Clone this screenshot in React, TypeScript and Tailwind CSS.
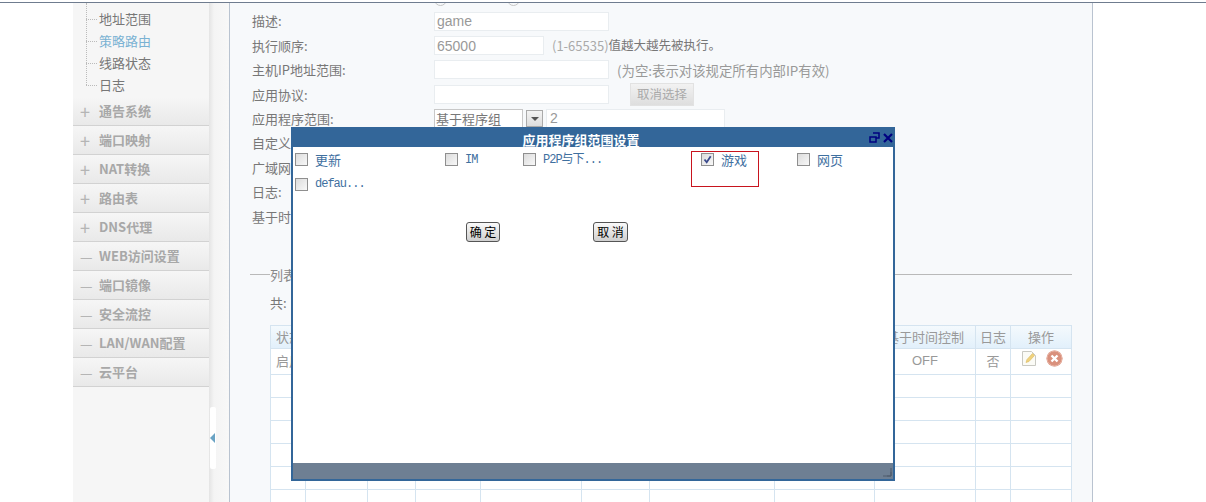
import React from "react";

const subItems = [
  { label: "地址范围", active: false },
  { label: "策略路由", active: true },
  { label: "线路状态", active: false },
  { label: "日志", active: false },
];

const sections = [
  { label: "通告系统", sign: "+" },
  { label: "端口映射", sign: "+" },
  { label: "NAT转换", sign: "+" },
  { label: "路由表", sign: "+" },
  { label: "DNS代理", sign: "+" },
  { label: "WEB访问设置", sign: "—" },
  { label: "端口镜像", sign: "—" },
  { label: "安全流控", sign: "—" },
  { label: "LAN/WAN配置", sign: "—" },
  { label: "云平台", sign: "—" },
];

const columns = [35, 62, 48, 65, 101, 68, 125, 100, 101, 35, 61];

const Sidebar = () => (
  <div className="w-[136px] h-full flex-shrink-0 bg-[#f6f6f6] flex flex-col">
    <div className="relative pt-[5px] pb-[1px] pl-[26px] h-[94px] flex-shrink-0">
      <div className="absolute left-[13px] top-[0px] h-[82px] border-l border-dotted border-[#bbb]" />
      {subItems.map((item) => (
        <div key={item.label} className={`relative h-[22px] leading-[22px] text-[13px] ${item.active ? "text-[#7ab2d3]" : "text-[#777]"}`}>
          <span className="absolute left-[-13px] top-[11px] w-[11px] border-t border-dotted border-[#bbb]" />
          {item.label}
        </div>
      ))}
    </div>
    {sections.map((s) => (
      <div key={s.label} className="h-[29px] flex-shrink-0 flex items-center border-b border-[#d2d2d2] bg-gradient-to-b from-[#f6f6f6] to-[#e9e9e9]">
        <span className={`w-[26px] pl-[7px] leading-none text-[#b5b5b5] ${s.sign === "+" ? "text-[18px]" : "text-[14px]"}`}>{s.sign}</span>
        <span className="text-[13px] font-bold text-[#a8a8a8]">{s.label}</span>
      </div>
    ))}
  </div>
);

const Gutter = () => (
  <div className="relative w-[20px] h-full flex-shrink-0 bg-gradient-to-r from-[#e4e4e4] via-[#f4f4f4] via-[25%] to-[#f8f8f8]">
    <div className="absolute left-[1px] top-[404px] w-[6px] h-[62px] bg-white rounded-[2px] flex items-center">
      <span className="w-0 h-0 border-y-[5px] border-y-transparent border-r-[5px] border-r-[#6aa3c4]" />
    </div>
  </div>
);

const FormRow = ({ label, children }: { label: string; children?: React.ReactNode }) => (
  <div className="h-[24.4px] flex-shrink-0 flex items-center">
    <span className="w-[182px] flex-shrink-0 text-[13px] text-[#777]">{label}</span>
    {children}
  </div>
);

const TextBox = ({ value, w }: { value?: string; w: string }) => (
  <div className={`${w} h-[19px] flex items-center px-[2px] border border-[#e9edf0] bg-white text-[14px] leading-none text-[#999] font-['Liberation_Sans',sans-serif]`}>
    {value}
  </div>
);

const EditIcon = () => (
  <svg width="16" height="17" viewBox="0 0 16 17">
    <path d="M1.5 1.5h9l4 4v10h-13z" fill="#fbfbf6" stroke="#c9c9c2" />
    <path d="M5 12.5l1-3 5.5-6 2 2-5.5 6z" fill="#efd27e" stroke="#dcb85c" strokeWidth="0.6" />
  </svg>
);

const DeleteIcon = () => (
  <svg width="17" height="17" viewBox="0 0 17 17">
    <circle cx="8.5" cy="8.5" r="8" fill="#d9907c" />
    <circle cx="8.5" cy="8.5" r="7.5" fill="none" stroke="#e8b5a6" />
    <path d="M5.5 5.5l6 6M11.5 5.5l-6 6" stroke="#fff" strokeWidth="2.4" />
  </svg>
);

const ListTable = () => (
  <table className="table-fixed border-collapse w-[802px] bg-white text-[13px] text-[#999]">
    <colgroup>
      {columns.map((w, i) => (
        <col key={i} style={{ width: w }} />
      ))}
    </colgroup>
    <thead>
      <tr className="h-[23px] bg-gradient-to-b from-[#f5fafd] to-[#e2f0fb]">
        <th className="border border-[#d5e4f0] font-normal text-left pl-[5px]">状态</th>
        {columns.slice(1, 8).map((_, i) => (
          <th key={i} className="border border-[#d5e4f0]" />
        ))}
        <th className="border border-[#d5e4f0] font-normal whitespace-nowrap">基于时间控制</th>
        <th className="border border-[#d5e4f0] font-normal">日志</th>
        <th className="border border-[#d5e4f0] font-normal">操作</th>
      </tr>
    </thead>
    <tbody>
      <tr className="h-[26px]">
        <td className="border border-[#d5e4f0] pl-[5px]">启用</td>
        {columns.slice(1, 8).map((_, i) => (
          <td key={i} className="border border-[#d5e4f0]" />
        ))}
        <td className="border border-[#d5e4f0] text-center font-['Liberation_Sans',sans-serif]">OFF</td>
        <td className="border border-[#d5e4f0] text-center">否</td>
        <td className="border border-[#d5e4f0]">
          <div className="flex items-start gap-[9px] pl-[10px] pb-[5px]">
            <EditIcon />
            <DeleteIcon />
          </div>
        </td>
      </tr>
      {[0, 1, 2, 3, 4, 5].map((r) => (
        <tr key={r} className="h-[23px]">
          {columns.map((_, i) => (
            <td key={i} className="border border-[#d5e4f0]" />
          ))}
        </tr>
      ))}
    </tbody>
  </table>
);

const Main = () => (
  <div className="w-[864px] h-full flex-shrink-0 border-x border-[#b9c3d0] bg-[#f7f9fb] pl-[22px] flex flex-col">
    <div className="h-[6px] flex-shrink-0 pl-[182px] flex gap-[60px] overflow-hidden">
      <span className="w-[13px] h-[13px] -mt-[10px] rounded-full border border-[#c5c5c5]" />
      <span className="w-[13px] h-[13px] -mt-[10px] rounded-full border border-[#c5c5c5]" />
    </div>
    <FormRow label="描述:">
      <TextBox value="game" w="w-[175px]" />
    </FormRow>
    <FormRow label="执行顺序:">
      <TextBox value="65000" w="w-[110px]" />
      <span className="ml-[8px] text-[13px] text-[#aaa]">(1-65535)</span>
      <span className="text-[12.5px] text-[#777]">值越大越先被执行。</span>
    </FormRow>
    <FormRow label="主机IP地址范围:">
      <TextBox w="w-[175px]" />
      <span className="ml-[8px] text-[13.4px] text-[#999]">(为空:表示对该规定所有内部IP有效)</span>
    </FormRow>
    <FormRow label="应用协议:">
      <TextBox w="w-[175px]" />
      <button className="ml-[21px] w-[64px] h-[23px] border border-[#e2e2e2] bg-gradient-to-b from-[#f2f2f2] to-[#dedede] text-[12.5px] text-[#aaa]">
        取消选择
      </button>
    </FormRow>
    <FormRow label="应用程序范围:">
      <div className="w-[89px] h-[19px] px-[1px] flex items-center border border-[#c8c8c8] bg-white text-[13px] text-[#777]">基于程序组</div>
      <div className="ml-[3px] w-[17px] h-[17px] flex items-center justify-center border border-[#aaa] bg-gradient-to-b from-[#f4f4f4] to-[#ddd]">
        <span className="w-0 h-0 border-x-[4px] border-x-transparent border-t-[4px] border-t-[#555]" />
      </div>
      <div className="ml-[3px] w-[179px] h-[19px] px-[3px] flex items-center border border-[#e9edf0] bg-white text-[14px] text-[#999] font-['Liberation_Sans',sans-serif]">2</div>
    </FormRow>
    <FormRow label="自定义" />
    <FormRow label="广域网" />
    <FormRow label="日志:" />
    <FormRow label="基于时" />
    <div className="mt-[34px] w-[822px] -ml-[2px] h-[24px] flex-shrink-0 flex items-center">
      <span className="w-[20px] border-t border-[#b9b9b9]" />
      <span className="text-[13px] text-[#888]">列表</span>
      <span className="flex-1 border-t border-[#b9b9b9]" />
    </div>
    <div className="mt-[6px] ml-[18px] h-[20px] flex-shrink-0 text-[13px] leading-[20px] text-[#777]">共:</div>
    <div className="mt-[12px] ml-[18px] flex-shrink-0">
      <ListTable />
    </div>
  </div>
);

const ModalOption = ({ label, width, checked, mono }: { label: string; width: string; checked?: boolean; mono?: boolean }) => (
  <div className={`${width} flex items-center flex-shrink-0`}>
    <span className="relative w-[13px] h-[13px] flex-shrink-0 border border-[#8f8f8f] bg-gradient-to-br from-[#dcdcdc] to-[#f8f8f8]">
      {checked && (
        <svg className="absolute left-0 top-0" width="11" height="11" viewBox="0 0 11 11">
          <path d="M2.5 5.5l2.2 2.8 4-6" fill="none" stroke="#3a4a8c" strokeWidth="1.8" />
        </svg>
      )}
    </span>
    <span className={`ml-[7px] text-[#3f709f] ${mono ? "font-['Liberation_Mono','Noto_Sans_CJK_SC',monospace] text-[12px] tracking-[-1px]" : "text-[13px]"}`}>{label}</span>
  </div>
);

const Modal = () => (
  <div className="absolute left-[291px] top-[127px] w-[604px] h-[354px] bg-[#336699] flex flex-col px-[2px] pb-[2px]">
    <div className="relative h-[20px] flex-shrink-0 text-center pr-[24px] text-[13px] leading-[13px] pt-[6px] font-bold text-white">
      应用程序组范围设置
      <div className="absolute right-0 top-[5px] flex items-center gap-[3px]">
        <svg width="11" height="11" viewBox="0 0 11 11">
          <path d="M4 1h6v5H7M1 5h6v5H1z" fill="none" stroke="#000080" strokeWidth="1.5" />
        </svg>
        <svg width="10" height="10" viewBox="0 0 10 10">
          <path d="M1 1l8 8M9 1l-8 8" stroke="#000080" strokeWidth="2.2" />
        </svg>
      </div>
    </div>
    <div className="relative flex-1 bg-white">
      <div className="pl-[2px] flex h-[25px] items-center">
        <ModalOption label="更新" width="w-[150px]" />
        <ModalOption label="IM" width="w-[78px]" mono />
        <ModalOption label="P2P与下..." width="w-[178px]" mono />
        <ModalOption label="游戏" width="w-[96px]" checked />
        <ModalOption label="网页" width="w-[80px]" />
      </div>
      <div className="pl-[2px] flex h-[24px] items-center">
        <ModalOption label="defau..." width="w-[150px]" mono />
      </div>
      <div className="absolute left-[398px] top-[4px] w-[68px] h-[36px] border border-[#c8141e]" />
      <div className="mt-[26px] flex pl-[173px] gap-[93px]">
        <button className="w-[34px] h-[20px] rounded-[3px] border border-[#555] bg-gradient-to-b from-[#fafafa] to-[#cfcfcf] text-[12px] leading-none text-black">确 定</button>
        <button className="w-[35px] h-[20px] rounded-[3px] border border-[#555] bg-gradient-to-b from-[#fafafa] to-[#cfcfcf] text-[12px] leading-none text-black">取 消</button>
      </div>
    </div>
    <div className="relative h-[16px] flex-shrink-0 bg-[#6e7f93]">
      <svg className="absolute right-[1px] bottom-[2px]" width="10" height="10" viewBox="0 0 10 10">
        <path d="M9 1v8H1M9 5v4H5" fill="none" stroke="#4e5c6c" />
      </svg>
    </div>
  </div>
);

export default function App() {
  return (
    <div className="relative w-[1206px] h-[502px] overflow-hidden bg-white font-['Noto_Sans_CJK_SC',sans-serif]">
      <div className="flex flex-col h-full">
        <div className="h-[3px] flex-shrink-0 border-b border-[#6f7c8f] bg-white" />
        <div className="flex-1 min-h-0 flex pl-[73px]">
          <Sidebar />
          <Gutter />
          <Main />
        </div>
      </div>
      <Modal />
    </div>
  );
}
